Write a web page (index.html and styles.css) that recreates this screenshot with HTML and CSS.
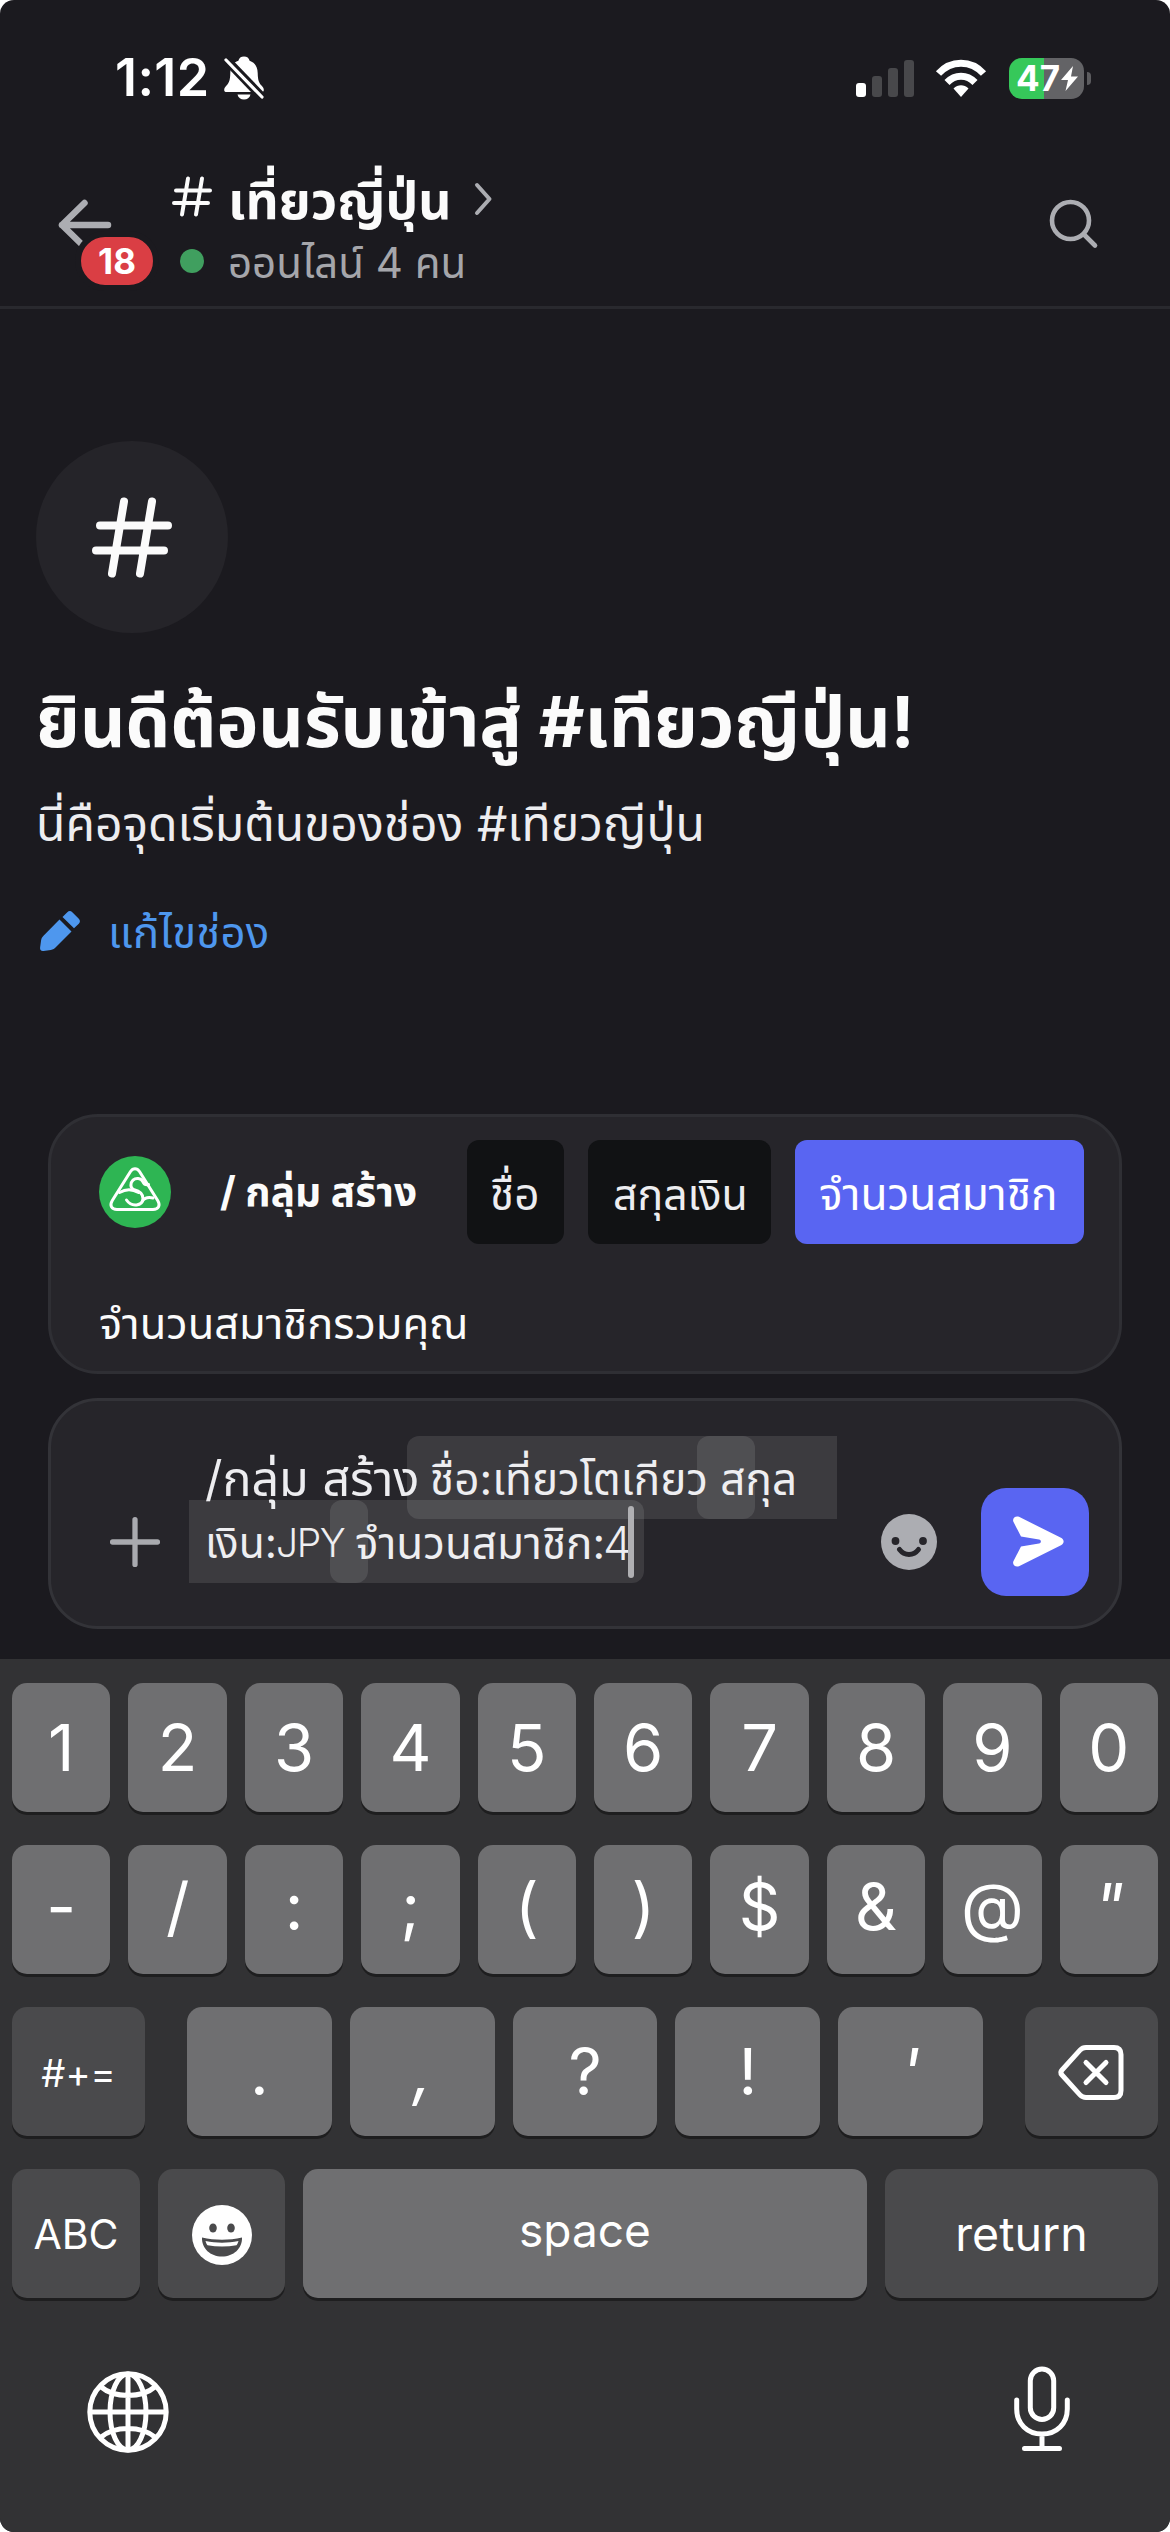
FILE: index.html
```html
<!DOCTYPE html>
<html lang="th">
<head>
<meta charset="utf-8">
<title>#เที่ยวญี่ปุ่น</title>
<link rel="stylesheet" href="styles.css">
</head>
<body>
<div class="phone">
  <div class="status">
    <span class="clock">1:12</span>
    <svg class="bell" viewBox="0 0 40 44" width="40" height="44"><path d="M20 .5c3 0 5 1.600 5.600 4.200C31 6.500 33.500 11 33.700 17c.2 7 1 9.500 3.800 12.500 1.600 1.700 2.300 3 2.300 4.400 0 1.300-.9 2.100-2.300 2.100H2.500C1 36 .2 35.200.2 33.900c0-1.400.7-2.700 2.300-4.400C5.300 26.500 6.100 24 6.300 17 6.500 11 9 6.500 14.400 4.700 15 2.100 17 .5 20 .5Z" fill="#fff"/><path d="M13.500 38.500h13c-.8 3.200-3.300 5-6.500 5s-5.700-1.800-6.500-5Z" fill="#fff"/><path d="M2 3.500 38 41" stroke="#1b1a1f" stroke-width="9"/><path d="M2 4 38 41" stroke="#fff" stroke-width="3.200" stroke-linecap="round"/></svg>
    <span class="signal"><i class="bar bar1"></i><i class="bar bar2"></i><i class="bar bar3"></i><i class="bar bar4"></i></span>
    <svg class="wifi" viewBox="0 0 50 37" width="50" height="37" fill="none" stroke="#fff"><path d="M2.500 13.500C15-.2 35-.2 47.500 13.500" stroke-width="7"/><path d="M11 22.500c8-8.300 20-8.300 28 0" stroke-width="7"/><path d="M25 37l-7.500-8.500c4.500-4.300 10.500-4.300 15 0Z" fill="#fff" stroke="none"/></svg>
    <span class="battery"><span class="level">47</span><svg viewBox="0 0 17 25" width="17" height="25"><path d="M12 0 0 14h7L4.500 25 17 10.500h-7Z" fill="#fff"/></svg></span><i class="tip"></i>
  </div>

  <div class="header">
    <div class="back">
      <svg viewBox="0 0 56 50" width="56" height="50" fill="none" stroke="#acadb2" stroke-width="6.500" stroke-linecap="round" stroke-linejoin="round"><path d="M27.500 5 5 27l22.500 22M5 27h46"/></svg>
      <span class="badge">18</span>
    </div>
    <div class="titles">
      <div class="title-row">
        <svg viewBox="0 0 80 80" width="40" height="41" fill="none" stroke="#fbfbfb" stroke-width="8" stroke-linecap="round"><path d="M32 4 20 76M60 4 48 76M8 28h68M4 53h68"/></svg>
        <h1 class="title">เที่ยวญี่ปุ่น</h1>
        <svg class="chev" viewBox="0 0 18 34" width="18" height="34" fill="none" stroke="#acadb2" stroke-width="4" stroke-linecap="round" stroke-linejoin="round"><path d="M3 3l12.500 14L3 31"/></svg>
      </div>
      <div class="online"><i class="dot"></i><span class="online-text">ออนไลน์ 4 คน</span></div>
    </div>
    <svg class="search" viewBox="0 0 50 50" width="50" height="50" fill="none" stroke="#acadb2" stroke-width="4.600" stroke-linecap="round"><circle cx="21.500" cy="21.500" r="18.500"/><path d="M35 35.500 46 46.500"/></svg>
  </div>

  <div class="welcome">
    <div class="circle"><svg viewBox="0 0 80 80" width="80" height="81" fill="none" stroke="#fbfbfb" stroke-width="8" stroke-linecap="round"><path d="M32 4 20 76M60 4 48 76M8 28h68M4 53h68"/></svg></div>
    <h2 class="headline">ยินดีต้อนรับเข้าสู่ #เทียวญีปุ่น!</h2>
    <p class="intro">นี่คือจุดเริ่มต้นของช่อง #เทียวญีปุ่น</p>
    <div class="edit">
      <svg viewBox="0 0 40 40" width="40" height="40" fill="#4e97ee"><path d="M19.500 8.500 31.500 20.500 15 37c-1.600 1.500-3.500 2-6 2.300l-5.500.7C1 40.300-.2 39 .1 36.500L1 30c.3-2.300.9-3.600 2.500-5.200ZM27.300 1.200c1.600-1.500 3.400-1.500 5 0l6.500 6.600c1.500 1.600 1.500 3.300 0 4.900L34 17.300 22.500 6Z"/></svg>
      <span class="edit-text">แก้ไขช่อง</span>
    </div>
  </div>

  <div class="command">
    <div class="command-row">
      <svg class="avatar" viewBox="0 0 72 72" width="72" height="72"><circle cx="36" cy="36" r="36" fill="#2eb553"/><g fill="none" stroke="#fff" stroke-width="3" stroke-linecap="round" stroke-linejoin="round"><path d="M31.500 15.500c2.500-3.600 6.500-3.600 9 0L58.700 44.500c3 5 .8 9-4.700 9H18c-5.500 0-7.700-4-4.700-9Z"/><path d="M49.500 28.500c-3 .8-4.500-.5-5.500-2.500-2-4.500-7.500-4.200-10-1.800-3 3-2.800 7.300.5 9.300 6 1.500 9.800 5 9.500 9.500-.6 6.500-11 9-16.500 1"/><path d="M20.500 36.500c6-3.500 13-3.500 19 0M43.500 45c2.500-3.800 6-4 10.500-3"/></g></svg>
      <span class="command-name">/ กลุ่ม สร้าง</span>
      <span class="chip chip-name"><span>ชื่อ</span></span>
      <span class="chip chip-currency"><span>สกุลเงิน</span></span>
      <span class="chip chip-members"><span>จำนวนสมาชิก</span></span>
    </div>
    <div class="command-desc"><span>จำนวนสมาชิกรวมคุณ</span></div>
  </div>

  <div class="composer">
    <svg class="plus" viewBox="0 0 50 50" width="50" height="50" stroke="#a9aaaf" stroke-width="5.300" stroke-linecap="round"><path d="M25 2.600v44.800M2.600 25h44.800"/></svg>
    <div class="input">
      <i class="mark m1"></i><i class="mark m2"></i><i class="mark m3"></i><i class="mark m4"></i>
      <div class="line"><span class="t-cmd">/กลุ่ม สร้าง</span><span class="t-a">ชื่อ:เที่ยวโตเกียว สกุล</span></div>
      <div class="line"><span class="t-b">เงิน:</span><span class="t-jpy">JPY</span><span class="t-c">จำนวนสมาชิก:</span><span class="t-four">4</span></div>
      <i class="caret"></i>
    </div>
    <svg class="smile" viewBox="0 0 56 56" width="56" height="56"><circle cx="28" cy="28" r="28" fill="#acadb2"/><circle cx="14.500" cy="27" r="3.900" fill="#26252a"/><circle cx="42" cy="27" r="3.900" fill="#26252a"/><path d="M18.500 35.500c5 6.500 14 6.500 19 0" fill="none" stroke="#26252a" stroke-width="5" stroke-linecap="round"/></svg>
    <div class="send"><svg viewBox="0 0 51 51" width="51" height="51" fill="#fff"><path d="M6 .8 48 21.800c3.500 1.900 3.500 5.500 0 7.400L6 50.200c-3.500 1.500-7-1.500-5.600-5L8 30.500l18-3c2.500-.5 2.500-3.500 0-4L8 20.500.4 5.800C-1 2.300 2.500-.7 6 .8Z"/></svg></div>
  </div>

  <div class="keyboard">
    <div class="keys"><b class="key">1</b><b class="key">2</b><b class="key">3</b><b class="key">4</b><b class="key">5</b><b class="key">6</b><b class="key">7</b><b class="key">8</b><b class="key">9</b><b class="key">0</b></div>
    <div class="keys punct"><b class="key">-</b><b class="key">/</b><b class="key">:</b><b class="key">;</b><b class="key">(</b><b class="key">)</b><b class="key">$</b><b class="key">&amp;</b><b class="key">@</b><b class="key slant">"</b></div>
    <div class="keys">
      <b class="key dark k-sym">#+=</b>
      <b class="key">.</b><b class="key slant">,</b><b class="key">?</b><b class="key">!</b><b class="key slant">'</b>
      <b class="key dark k-del"><svg viewBox="0 0 66 55" width="66" height="55" fill="none" stroke="#fff" stroke-width="5" stroke-linecap="round" stroke-linejoin="round"><path d="M28 2.500h28c4.500 0 7 2.500 7 7v36c0 4.500-2.500 7-7 7H28c-2.500 0-4.300-.8-6-2.600L4 30c-1.600-1.700-1.600-3.300 0-5L22 5.100c1.700-1.800 3.500-2.600 6-2.600Z"/><path d="M28 17.500l20 20M48 17.500l-20 20"/></svg></b>
    </div>
    <div class="keys">
      <b class="key dark k-abc">ABC</b>
      <b class="key dark k-emoji"><svg viewBox="0 0 60 60" width="60" height="60"><circle cx="30" cy="30" r="30" fill="#fff"/><ellipse cx="21" cy="23" rx="3.800" ry="4.500" fill="#4a4a4c"/><ellipse cx="39" cy="23" rx="3.800" ry="4.500" fill="#4a4a4c"/><path d="M10 32.500c13 3 27 3 40 0 .5 11-8.500 19-20 19s-20.500-8-20-19Z" fill="#4a4a4c"/><path d="M13.500 36c11 2.200 22 2.200 33 0-.5 2-1.200 3.300-2 4.300-9.500 1.600-19.500 1.600-29 0-.8-1-1.500-2.300-2-4.300Z" fill="#fff"/></svg></b>
      <b class="key k-space">space</b>
      <b class="key dark k-return">return</b>
    </div>
    <div class="dock">
      <svg class="globe" viewBox="0 0 82 82" width="82" height="82" fill="none" stroke="#fff" stroke-width="5"><circle cx="41" cy="41" r="38.200"/><ellipse cx="41" cy="41" rx="18" ry="38"/><path d="M41 3v76M3 41h76M13.500 15.500c14 12 41 12 55 0M13.500 66.500c14-12 41-12 55 0"/></svg>
      <svg viewBox="0 0 56 86" width="56" height="86" fill="none" stroke="#fff" stroke-width="5" stroke-linecap="round"><rect x="16.300" y="3" width="23.400" height="50.500" rx="11.700"/><path d="M2.700 34v9c0 14.500 10.500 25 25.300 25s25.300-10.500 25.300-25v-9M28 68v14.500M10.500 82.500h35"/></svg>
    </div>
  </div>
</div>
</body>
</html>
```
FILE: styles.css
```css
* { box-sizing: border-box; margin: 0; padding: 0; }
html, body { background: #fff; }
body { font-family: Inter, "Noto Sans Thai", "Noto Sans", sans-serif; color: #fbfbfb; }
svg { display: block; flex: none; overflow: visible; }
i, b { font-style: normal; font-weight: 400; }
span, h1, h2, p { white-space: nowrap; }

.phone { width: 1170px; height: 2532px; background: #1b1a1f; border-radius: 14px; overflow: hidden; display: flex; flex-direction: column; }

.status { height: 156px; padding-left: 115px; display: flex; align-items: center; flex: none; color: #fff; }
.clock { width: 109px; font-size: 52px; line-height: 60px; font-weight: 600; letter-spacing: 0.4px; }
.bell { margin-right: 592px; }
.signal { display: flex; align-items: flex-end; gap: 6px; height: 37px; margin-right: 22px; }
.bar { width: 10px; border-radius: 3px; background: #48484b; }
.bar1 { height: 14px; background: #fff; }
.bar2 { height: 21px; }
.bar3 { height: 29px; }
.bar4 { height: 37px; }
.wifi { margin-right: 23px; }
.battery { width: 75px; height: 41px; border-radius: 13px; background: linear-gradient(90deg, #36c85a 35px, #636366 35px); display: flex; align-items: center; padding-left: 7px; gap: 2px; }
.level { width: 43px; font-size: 35px; line-height: 40px; font-weight: 700; }
.tip { width: 4px; height: 13px; margin-left: 3px; border-radius: 0 4px 4px 0; background: #5c5c5f; }

.header { height: 153px; border-bottom: 3px solid #29292e; display: flex; flex: none; padding-left: 57px; }
.back { position: relative; width: 115px; padding-top: 42px; }
.badge { position: absolute; left: 18px; top: 75px; width: 84px; height: 60px; border: 6px solid #1b1a1f; border-radius: 30px; background: #da3e44; display: flex; align-items: center; justify-content: center; font-size: 35px; font-weight: 700; color: #fff; }
.titles { width: 877px; }
.title-row { display: flex; align-items: center; height: 80px; }
.title { margin-left: 16px; padding-top: 8px; width: 246px; font-size: 51.5px; line-height: 80px; font-weight: 700; }
.chev { margin-top: 6px; }
.online { display: flex; align-items: center; height: 50px; padding-left: 8px; }
.dot { width: 24px; height: 24px; border-radius: 50%; background: #409f5f; margin-right: 24px; }
.online-text { padding-top: 4px; color: #a5a6ab; font-size: 42px; line-height: 50px; }
.search { margin-top: 43px; }

.welcome { height: 805px; flex: none; padding: 132px 0 0 36px; }
.circle { width: 192px; height: 192px; border-radius: 50%; background: #252429; display: flex; align-items: center; justify-content: center; }
.headline { margin-top: 39px; font-size: 70.6px; line-height: 100px; font-weight: 700; }
.intro { margin-top: 22px; height: 64px; font-size: 48px; line-height: 60px; color: #ededf0; }
.edit { display: flex; align-items: center; margin-top: 42px; padding-left: 4px; gap: 28px; height: 62px; }
.edit-text { padding-top: 4px; color: #4e97ee; font-size: 43.6px; line-height: 62px; letter-spacing: 0.2px; }

.command { height: 260px; flex: none; margin: 0 48px 24px; border: 3px solid #2f2f34; border-radius: 50px; background: #26252a; }
.command-row { height: 151px; display: flex; align-items: center; padding: 0 0 2px 48px; }
.command-name { margin-left: 49px; width: 247px; font-size: 40.6px; line-height: 60px; font-weight: 700; }
.chip { height: 104px; border-radius: 12px; background: #111214; margin-right: 24px; padding-left: 24px; line-height: 109px; font-size: 42.8px; color: #ededf0; }
.chip-name { width: 97px; padding-left: 23px; font-size: 44px; }
.chip-currency { width: 183px; padding-left: 25px; }
.chip-members { width: 289px; background: #5965f2; color: #fff; margin: 0; font-size: 44.2px; }
.command-desc { padding-left: 48px; height: 103px; font-size: 43.4px; line-height: 110px; }

.composer { height: 231px; flex: none; margin: 0 48px 30px; border: 3px solid #333338; border-radius: 50px; background: #26252a; display: flex; padding-left: 59px; }
.plus { margin-top: 116px; margin-right: 29px; }
.input { position: relative; width: 648px; margin-right: 44px; padding: 46px 0 0 16px; color: #ededf0; }
.line { display: flex; height: 64px; align-items: center; font-size: 44px; line-height: 64px; }
.t-cmd { width: 225px; font-size: 48.4px; }
.t-b { width: 71px; font-size: 42.5px; }
.t-jpy { width: 79px; font-size: 39px; font-weight: 300; letter-spacing: -1.4px; }
.t-c { width: 248px; }
.t-four { font-size: 46px; font-weight: 300; }
.mark { position: absolute; height: 83px; background: rgba(255, 255, 255, .1); }
.m1 { left: 218px; top: 35px; width: 348px; border-radius: 12px; }
.m2 { left: 508px; top: 35px; width: 140px; border-radius: 12px 0 0 12px; }
.m3 { left: 0; top: 99px; width: 179px; border-radius: 0 12px 12px 0; }
.m4 { left: 141px; top: 99px; width: 314px; border-radius: 12px; }
.caret { position: absolute; left: 439px; top: 105px; width: 6px; height: 72px; border-radius: 3px; background: #b0b0b3; }
.smile { margin-top: 113px; margin-right: 44px; }
.send { width: 108px; height: 108px; border-radius: 25px; margin-top: 87px; background: #5965f2; padding: 28px 0 0 32px; }

.keyboard { height: 873px; flex: none; background: #323234; padding: 24px 12px 0; color: #fff; }
.keys { display: flex; gap: 18px; height: 129px; margin-bottom: 33px; }
.key { flex: 1 1 0; display: flex; align-items: center; justify-content: center; border-radius: 15px; background: #6f6f71; box-shadow: 0 3px 0 #1e1e1f; font-size: 65px; line-height: 65px; padding-bottom: 1px; }
.punct .key { padding-bottom: 6px; }
.slant { font-style: italic; }
.dark { background: #4a4a4c; padding: 2px 0 0; }
.k-sym { flex: none; width: 133px; margin-right: 24px; font-size: 38px; padding-top: 4px; }
.k-del { flex: none; width: 133px; margin-left: 24px; }
.k-abc { flex: none; width: 128px; font-size: 41px; }
.k-emoji { flex: none; width: 127px; }
.k-space { font-size: 46px; padding-bottom: 7px; }
.k-return { flex: none; width: 273px; font-size: 46.5px; }
.dock { display: flex; justify-content: space-between; align-items: center; height: 90px; margin-top: 66px; padding: 0 88px 0 75px; }
.globe { margin-top: 5px; }
```
